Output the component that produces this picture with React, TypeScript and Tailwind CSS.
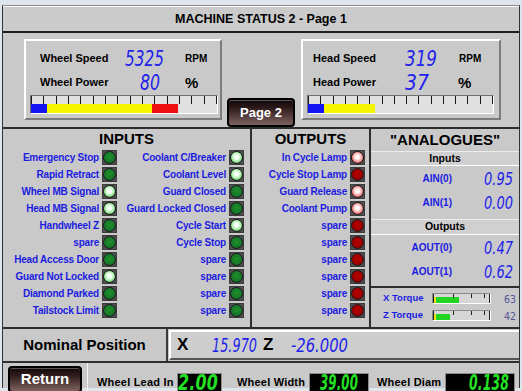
import React from "react";

type Io = [string, boolean];

const inputsLeft: Io[] = [
  ["Emergency Stop", false],
  ["Rapid Retract", false],
  ["Wheel MB Signal", true],
  ["Head MB Signal", true],
  ["Handwheel Z", false],
  ["spare", false],
  ["Head Access Door", false],
  ["Guard Not Locked", true],
  ["Diamond Parked", false],
  ["Tailstock Limit", false],
];

const inputsRight: Io[] = [
  ["Coolant C/Breaker", true],
  ["Coolant Level", true],
  ["Guard Closed", false],
  ["Guard Locked Closed", false],
  ["Cycle Start", true],
  ["Cycle Stop", false],
  ["spare", false],
  ["spare", false],
  ["spare", false],
  ["spare", false],
];

const outputs: Io[] = [
  ["In Cycle Lamp", true],
  ["Cycle Stop Lamp", false],
  ["Guard Release", true],
  ["Coolant Pump", true],
  ["spare", false],
  ["spare", false],
  ["spare", false],
  ["spare", false],
  ["spare", false],
  ["spare", false],
];

const lampFace = {
  greenOn:
    "bg-[radial-gradient(circle_at_50%_45%,#ffffff_0%,#f4fff4_25%,#a8eca8_55%,#3aa63a_85%,#1e6e1e_100%)]",
  greenOff:
    "bg-[radial-gradient(circle_at_50%_45%,#1f8f2a_0%,#17782a_60%,#0b4d14_100%)]",
  redOn:
    "bg-[radial-gradient(circle_at_50%_45%,#ffffff_0%,#fff2f2_25%,#f4a0a0_55%,#d83030_85%,#901010_100%)]",
  redOff:
    "bg-[radial-gradient(circle_at_50%_45%,#b80000_0%,#9c0000_60%,#600000_100%)]",
};

function Lamp({ on, red }: { on: boolean; red?: boolean }) {
  const face = red
    ? on
      ? lampFace.redOn
      : lampFace.redOff
    : on
      ? lampFace.greenOn
      : lampFace.greenOff;
  return (
    <div className="w-[15px] h-[15px] shrink-0 bg-[#4f4f4f] border border-[#3c3c3c] flex items-center justify-center">
      <div className={`w-[13px] h-[13px] rounded-full border border-[#1a1a1a] ${face}`} />
    </div>
  );
}

function IoRow({ label, on, red }: { label: string; on: boolean; red?: boolean }) {
  return (
    <div className="h-[17px] flex items-center justify-end gap-[3px]">
      <span className="text-[10px] font-bold tracking-[-0.2px] text-[#1c1ce0] whitespace-nowrap">
        {label}
      </span>
      <Lamp on={on} red={red} />
    </div>
  );
}

// segment-display readout: text squeezed to the width the panel gives it
function Readout({
  value,
  w,
  h,
  color,
  italic = true,
}: {
  value: string;
  w: number;
  h: number;
  color: string;
  italic?: boolean;
}) {
  const size = h / 0.729;
  return (
    <svg width={w + 3} height={h + 8} className="block shrink-0 overflow-visible">
      <text
        x={0}
        y={h + 4}
        textLength={w}
        lengthAdjust="spacingAndGlyphs"
        fontFamily="DejaVu Sans, sans-serif"
        fontStyle={italic ? "italic" : "normal"}
        fontSize={size}
        fill={color}
      >
        {value}
      </text>
    </svg>
  );
}

function ScaleBar({
  segments,
  className,
}: {
  segments: [string, number][];
  className: string;
}) {
  return (
    <div
      className={`h-[19px] bg-[#e0e0e0] border border-t-[#707070] border-l-[#707070] border-b-white border-r-white flex flex-col ${className}`}
    >
      <div className="h-[8px] flex justify-between">
        {Array.from({ length: 16 }).map((_, i) => (
          <div key={i} className="w-px h-full bg-[#1a1a1a]" />
        ))}
      </div>
      <div className="flex h-[9px]">
        {segments.map(([c, w], i) => (
          <div key={i} className={c} style={{ width: w }} />
        ))}
      </div>
    </div>
  );
}

function TorqueBar({ fill }: { fill: number }) {
  return (
    <div className="relative w-[59px] h-[11px] bg-[#d6d6d6] border border-t-[#8a8a8a] border-l-[#8a8a8a] border-b-white border-r-white flex items-center">
      <div className="flex h-[6px] mt-[2px]">
        <div className="w-[3px] bg-[#f0e020]" />
        <div className="bg-[#22d422]" style={{ width: fill }} />
      </div>
      <div className="absolute left-0 top-0 w-px h-full bg-[#222]" />
      <div className="absolute left-[20px] top-0 w-px h-[4px] bg-[#222]" />
      <div className="absolute left-[38px] top-0 w-px h-[4px] bg-[#222]" />
      <div className="absolute left-[51px] top-0 w-px h-[4px] bg-[#222]" />
      <div className="absolute right-0 top-0 w-px h-full bg-[#222]" />
    </div>
  );
}

const glossy =
  "bg-[linear-gradient(180deg,#120808_0%,#2c1a1a_30%,#5c4242_70%,#7e6262_100%)] border-2 border-black rounded-[4px] text-white font-bold shadow-[inset_0_1px_0_rgba(255,255,255,0.3)]";

const BLUE = "#2222ea";
const GREEN = "#22e022";

export default function App() {
  return (
    <div className="w-[522px] h-[391px] overflow-hidden bg-[#dfe5ec] pt-[5px] pl-[2px] font-['Liberation_Sans',Arial,sans-serif] text-black">
      <div className="w-[518px] h-[383px] bg-[#c9c9c9] border-t border-t-[#8c8c8c] border-x border-x-[#333] flex flex-col">
        {/* title */}
        <div className="h-[27px] shrink-0 bg-[#cbcbcb] border-t border-t-white border-b-2 border-b-[#1e1e1e] flex items-center justify-center">
          <span className="text-[12.5px] font-bold">MACHINE STATUS 2 - Page 1</span>
        </div>

        {/* gauges */}
        <div className="h-[94px] shrink-0 flex items-start">
          <div className="w-[198px] h-[81px] mt-[6px] ml-[21px] border-2 border-t-white border-l-white border-r-[#7c7c7c] border-b-[#7c7c7c] flex flex-col">
            <div className="grid grid-cols-[96px_45px_1fr] h-[18px] mt-[6px] items-center">
              <span className="pl-[14px] text-[11px] font-bold">Wheel Speed</span>
              <div className="flex justify-end">
                <Readout value="5325" w={39} h={15} color={BLUE} />
              </div>
              <span className="pl-[18px] text-[10px] font-bold">RPM</span>
            </div>
            <div className="grid grid-cols-[96px_45px_1fr] h-[18px] mt-[6px] items-center">
              <span className="pl-[14px] text-[11px] font-bold">Wheel Power</span>
              <div className="flex justify-end pr-[4px]">
                <Readout value="80" w={20} h={15} color={BLUE} />
              </div>
              <span className="pl-[18px] text-[15px] font-bold leading-none">%</span>
            </div>
            <ScaleBar
              className="mt-[6px] ml-[4px] w-[188px]"
              segments={[
                ["bg-[#1414f0]", 16],
                ["bg-[#f5f500]", 105],
                ["bg-[#ee1010]", 26],
              ]}
            />
          </div>

          <div
            className={`self-end ml-[5px] w-[68px] h-[29px] flex items-center justify-center text-[13px] ${glossy}`}
          >
            Page 2
          </div>

          <div className="w-[200px] h-[81px] mt-[6px] ml-[6px] border-2 border-t-white border-l-white border-r-[#7c7c7c] border-b-[#7c7c7c] flex flex-col">
            <div className="grid grid-cols-[102px_40px_1fr] h-[18px] mt-[6px] items-center">
              <span className="pl-[10px] text-[11px] font-bold">Head Speed</span>
              <div className="flex">
                <Readout value="319" w={32} h={15} color={BLUE} />
              </div>
              <span className="pl-[14px] text-[10px] font-bold">RPM</span>
            </div>
            <div className="grid grid-cols-[102px_40px_1fr] h-[18px] mt-[6px] items-center">
              <span className="pl-[10px] text-[11px] font-bold">Head Power</span>
              <div className="flex">
                <Readout value="37" w={24} h={15} color={BLUE} />
              </div>
              <span className="pl-[13px] text-[15px] font-bold leading-none">%</span>
            </div>
            <ScaleBar
              className="mt-[6px] ml-[4px] w-[187px]"
              segments={[
                ["bg-[#1414f0]", 16],
                ["bg-[#f5f500]", 51],
              ]}
            />
          </div>
        </div>

        {/* inputs / outputs / analogues */}
        <div className="h-[202px] shrink-0 border-y-2 border-[#2e2e2e] flex">
          <div className="w-[249px] shrink-0 border-r-2 border-r-[#2e2e2e] flex flex-col">
            <div className="h-[20px] flex items-center justify-center text-[15px] font-bold">INPUTS</div>
            <div className="flex">
              <div className="w-[115px] pr-[1px] flex flex-col">
                {inputsLeft.map(([l, o], i) => (
                  <IoRow key={i} label={l} on={o} />
                ))}
              </div>
              <div className="w-[127px] pr-[1px] flex flex-col">
                {inputsRight.map(([l, o], i) => (
                  <IoRow key={i} label={l} on={o} />
                ))}
              </div>
            </div>
          </div>

          <div className="w-[119px] shrink-0 border-r-2 border-r-[#2e2e2e] flex flex-col">
            <div className="h-[20px] flex items-center justify-center text-[15px] font-bold">OUTPUTS</div>
            <div className="pr-[4px] flex flex-col">
              {outputs.map(([l, o], i) => (
                <IoRow key={i} label={l} on={o} red />
              ))}
            </div>
          </div>

          <div className="flex-1 flex flex-col">
            <div className="h-[22px] flex items-center justify-center text-[15px] font-bold">"ANALOGUES"</div>
            <div className="h-[15px] bg-[#d0d0d0] border-y border-t-[#ececec] border-b-white flex items-center justify-center text-[10.5px] font-bold">
              Inputs
            </div>
            {[
              ["AIN(0)", "0.95"],
              ["AIN(1)", "0.00"],
            ].map(([l, v]) => (
              <div key={l} className="h-[24px] flex items-center">
                <span className="w-[81px] text-right text-[10px] font-bold text-[#1c1ce0]">{l}</span>
                <div className="flex-1 flex justify-end pr-[3px]">
                  <Readout value={v} w={29} h={13} color={BLUE} />
                </div>
              </div>
            ))}
            <div className="mt-[5px] h-[16px] bg-[#d0d0d0] border-y border-t-[#ececec] border-b-white flex items-center justify-center text-[10.5px] font-bold">
              Outputs
            </div>
            {[
              ["AOUT(0)", "0.47"],
              ["AOUT(1)", "0.62"],
            ].map(([l, v]) => (
              <div key={l} className="h-[24px] flex items-center">
                <span className="w-[81px] text-right text-[10px] font-bold text-[#1c1ce0]">{l}</span>
                <div className="flex-1 flex justify-end pr-[3px]">
                  <Readout value={v} w={29} h={13} color={BLUE} />
                </div>
              </div>
            ))}
            <div className="mt-[3px] border-t-2 border-t-[#2e2e2e] pt-[2px] flex flex-col">
              {[
                ["X Torque", 23, "63"],
                ["Z Torque", 14, "42"],
              ].map(([l, f, v]) => (
                <div key={l as string} className="h-[17px] flex items-center pl-[12px]">
                  <span className="w-[49px] text-[9.5px] font-bold text-[#1c1ce0] whitespace-nowrap">{l}</span>
                  <TorqueBar fill={f as number} />
                  <div className="flex-1 flex justify-end">
                    <Readout value={v as string} w={12} h={8} color="#55559a" italic={false} />
                  </div>
                </div>
              ))}
            </div>
          </div>
        </div>

        {/* nominal position */}
        <div className="h-[34px] shrink-0 border-b-2 border-b-[#2e2e2e] flex">
          <div className="w-[165px] shrink-0 border-r-2 border-r-[#3a3a3a] flex items-center justify-center text-[15px] font-bold">
            Nominal Position
          </div>
          <div className="flex-1 my-[1px] ml-[1px] bg-[#cdcdcd] border-t-2 border-l-2 border-t-white border-l-white border-b-2 border-b-[#555] flex items-center pl-[6px]">
            <span className="w-[35px] text-[17px] font-bold">X</span>
            <Readout value="15.970" w={45} h={14} color={BLUE} />
            <span className="ml-[3px] w-[28px] text-[17px] font-bold">Z</span>
            <Readout value="-26.000" w={57} h={14} color={BLUE} />
          </div>
        </div>

        {/* bottom bar */}
        <div className="flex-1 flex">
          <div
            className={`ml-[5px] mt-[3px] w-[74px] flex items-center justify-center text-[15px] ${glossy}`}
          >
            Return
          </div>
          <div className="ml-[5px] flex-1 border-l border-l-[#f4f4f4] flex items-end pl-[9px] text-[11px] font-bold tracking-[0.2px]">
            <span className="w-[80px] h-[20px] flex items-center">Wheel Lead In</span>
            <div className="w-[45px] h-[20px] bg-black border border-[#8a8a8a] flex items-center justify-end overflow-hidden">
              <Readout value="2.00" w={40} h={15} color={GREEN} />
            </div>
            <span className="ml-[15px] w-[72px] h-[20px] flex items-center">Wheel Width</span>
            <div className="w-[60px] h-[20px] bg-black border border-[#8a8a8a] pr-[7px] flex items-center justify-end overflow-hidden">
              <Readout value="39.00" w={38} h={15} color={GREEN} />
            </div>
            <span className="ml-[8px] w-[68px] h-[20px] flex items-center">Wheel Diam</span>
            <div className="w-[70px] h-[20px] bg-black border border-[#8a8a8a] pr-[2px] flex items-center justify-end overflow-hidden">
              <Readout value="0.138" w={40} h={15} color={GREEN} />
            </div>
          </div>
        </div>
      </div>
    </div>
  );
}
